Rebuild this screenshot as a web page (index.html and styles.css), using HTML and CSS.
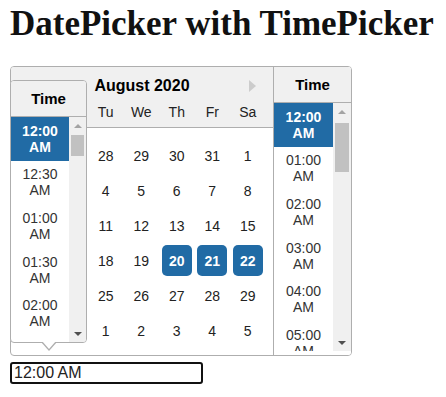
FILE: index.html
```html
<!DOCTYPE html>
<html lang="en">
<head>
    <meta charset="UTF-8">
    <meta name="viewport" content="width=device-width, initial-scale=1.0">
    <title>DatePicker with TimePicker</title>
    <link rel="stylesheet" href="styles.css">
</head>
<body>
    <h1 class="title">DatePicker with TimePicker</h1>

    <div class="picker">
        <div class="calendar">
            <div class="month">
                <div class="month-head">
                    <span class="nav-next"></span>
                    <div class="month-name">August 2020</div>
                    <div class="day-names">
                        <span class="covered">Su</span><span class="covered">Mo</span><span>Tu</span><span>We</span><span>Th</span><span>Fr</span><span>Sa</span>
                    </div>
                </div>
                <div class="days">
                    <div class="day covered"><span>26</span></div><div class="day covered"><span>27</span></div><div class="day"><span>28</span></div><div class="day"><span>29</span></div><div class="day"><span>30</span></div><div class="day"><span>31</span></div><div class="day"><span>1</span></div>
                    <div class="day covered"><span>2</span></div><div class="day covered"><span>3</span></div><div class="day"><span>4</span></div><div class="day"><span>5</span></div><div class="day"><span>6</span></div><div class="day"><span>7</span></div><div class="day"><span>8</span></div>
                    <div class="day covered"><span>9</span></div><div class="day covered"><span>10</span></div><div class="day"><span>11</span></div><div class="day"><span>12</span></div><div class="day"><span>13</span></div><div class="day"><span>14</span></div><div class="day"><span>15</span></div>
                    <div class="day covered"><span>16</span></div><div class="day covered"><span>17</span></div><div class="day"><span>18</span></div><div class="day"><span>19</span></div><div class="day day-selected"><span>20</span></div><div class="day day-selected"><span>21</span></div><div class="day day-selected"><span>22</span></div>
                    <div class="day covered"><span>23</span></div><div class="day covered"><span>24</span></div><div class="day"><span>25</span></div><div class="day"><span>26</span></div><div class="day"><span>27</span></div><div class="day"><span>28</span></div><div class="day"><span>29</span></div>
                    <div class="day covered"><span>30</span></div><div class="day covered"><span>31</span></div><div class="day"><span>1</span></div><div class="day"><span>2</span></div><div class="day"><span>3</span></div><div class="day"><span>4</span></div><div class="day"><span>5</span></div>
                </div>
            </div>

            <div class="time time-wide">
                <div class="time-head">Time</div>
                <div class="time-body">
                    <ul class="time-list">
                        <li class="time-selected">12:00 AM</li>
                        <li>01:00 AM</li>
                        <li>02:00 AM</li>
                        <li>03:00 AM</li>
                        <li>04:00 AM</li>
                        <li>05:00 AM</li>
                    </ul>
                    <div class="scrollbar">
                        <span class="sb-btn sb-up"></span>
                        <span class="sb-track"><span class="sb-thumb"></span></span>
                        <span class="sb-btn sb-down"></span>
                    </div>
                </div>
            </div>
        </div>

        <!-- popup tylko z czasem, nad kalendarzem -->
        <div class="popper">
            <div class="time time-narrow">
                <div class="time-head">Time</div>
                <div class="time-body">
                    <ul class="time-list">
                        <li class="time-selected">12:00 AM</li>
                        <li>12:30 AM</li>
                        <li>01:00 AM</li>
                        <li>01:30 AM</li>
                        <li>02:00 AM</li>
                        <li>02:30 AM</li>
                    </ul>
                    <div class="scrollbar">
                        <span class="sb-btn sb-up"></span>
                        <span class="sb-track"><span class="sb-thumb"></span></span>
                        <span class="sb-btn sb-down"></span>
                    </div>
                </div>
            </div>
            <span class="triangle"></span>
        </div>
    </div>

    <input type="text" class="date-input" value="12:00 AM">
</body>
</html>
```

FILE: styles.css
```css
body {
    margin: 0;
    padding: 4px 10px 0;
    background-color: #ffffff;
    font-family: "Liberation Sans", Arial, sans-serif;
}
.title {
    margin: 0 0 22px;
    font: bold 35px/40px "Liberation Serif", "Times New Roman", serif;
    color: #111;
    white-space: nowrap;
}
.picker {
    position: relative;
    width: 342px;
}
.calendar {
    display: flex;
    height: 290px;
    box-sizing: border-box;
    border: 1px solid #aeaeae;
    border-radius: 4px;
    background-color: #fff;
    overflow: hidden;
}
.month {
    width: 262px;
}
.month-head {
    position: relative;
    height: 61px;
    box-sizing: border-box;
    border-bottom: 1px solid #aeaeae;
    background-color: #f0f0f0;
    text-align: center;
}
.month-name {
    padding-top: 9px;
    font-size: 16px;
    font-weight: bold;
    line-height: 20px;
    color: #000;
}
.nav-next {
    position: absolute;
    top: 13px;
    right: 17px;
    width: 0;
    height: 0;
    border-left: 7px solid #ccc;
    border-top: 6px solid transparent;
    border-bottom: 6px solid transparent;
}
.day-names,
.days {
    display: grid;
    grid-template-columns: repeat(7, 35.5px);
    padding: 0 6px;
    font-size: 14px;
    color: #222;
}
.day-names {
    margin-top: 6px;
    line-height: 20px;
}
.days {
    grid-auto-rows: 35px;
    padding-top: 10px;
}
.day {
    display: flex;
    align-items: center;
    justify-content: center;
}
.day span {
    width: 30px;
    height: 31px;
    display: flex;
    align-items: center;
    justify-content: center;
    border-radius: 5px;
}
.day-selected span {
    background-color: #216ba5;
    color: #fff;
    font-weight: bold;
}
.covered {
    visibility: hidden; /* zasłonięte przez popup */
}

/* kolumna z czasem */
.time {
    display: flex;
    flex-direction: column;
    background-color: #fff;
    box-sizing: border-box;
}
.time-wide {
    width: 78px;
    border-left: 1px solid #aeaeae;
    padding-bottom: 4px;
}
.time-head {
    height: 36px;
    flex: none;
    box-sizing: border-box;
    border-bottom: 1px solid #aeaeae;
    background-color: #f0f0f0;
    font-size: 15px;
    font-weight: bold;
    line-height: 35px;
    text-align: center;
    color: #000;
}
.time-body {
    flex: 1;
    display: flex;
    min-height: 0;
}
.time-list {
    flex: 1;
    margin: 0;
    padding: 0;
    list-style: none;
    overflow: hidden;
    font-size: 14px;
    color: #333;
}
.time-list li {
    height: 43.6px;
    padding: 0 4px;
    display: flex;
    align-items: center;
    justify-content: center;
    text-align: center;
    line-height: 16px;
}
.time-list .time-selected {
    background-color: #216ba5;
    color: #fff;
    font-weight: bold;
}
.scrollbar {
    width: 18px;
    display: flex;
    flex-direction: column;
    background-color: #f0f0f0;
}
.sb-btn {
    height: 17px;
    flex: none;
    display: flex;
    align-items: center;
    justify-content: center;
}
.sb-btn::before {
    content: "";
    border-left: 4px solid transparent;
    border-right: 4px solid transparent;
}
.sb-up::before {
    border-bottom: 4px solid #a3a3a3;
}
.sb-down::before {
    border-top: 4px solid #505050;
}
.sb-track {
    flex: 1;
    padding: 3px 2px 0;
}
.sb-thumb {
    display: block;
    height: 49px;
    background-color: #c1c1c1;
}

/* popup nad kalendarzem */
.popper {
    position: absolute;
    left: 0;
    top: 14px;
    width: 77px;
}
.time-narrow {
    height: 263px;
    border: 1px solid #aeaeae;
    border-radius: 4px;
    overflow: hidden;
}
.time-narrow .scrollbar {
    width: 17px;
}
.time-narrow .sb-track {
    padding-top: 1px;
}
.time-narrow .sb-thumb {
    height: 21px;
}
.triangle {
    position: absolute;
    left: 31px;
    top: 262px;
    width: 0;
    height: 0;
    border-left: 8px solid transparent;
    border-right: 8px solid transparent;
    border-top: 9px solid #aeaeae;
}
.triangle::after {
    content: "";
    position: absolute;
    left: -7px;
    top: -10px;
    border-left: 7px solid transparent;
    border-right: 7px solid transparent;
    border-top: 8px solid #fff;
}
.date-input {
    display: block;
    margin-top: 6px;
    width: 193px;
    height: 22px;
    box-sizing: border-box;
    border: 2px solid #111;
    border-radius: 3px;
    padding: 0 2px;
    font: 16px "Liberation Sans", Arial, sans-serif;
    color: #222;
    outline: none;
}
```
